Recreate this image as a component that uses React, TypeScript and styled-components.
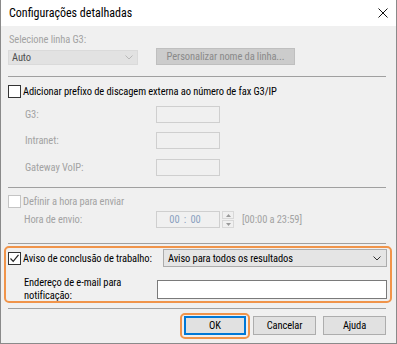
import React from "react";
import styled, { createGlobalStyle } from "styled-components";

const Global = createGlobalStyle`
  html, body { margin: 0; padding: 0; background: #ffffff; }
  * { box-sizing: border-box; }
`;

const Window = styled.div`
  width: 397px;
  height: 344px;
  border: 1px solid #8a8a8a;
  border-top: none;
  background: #f0f0f0;
  font-family: "Roboto Condensed", "Liberation Sans", Arial, sans-serif;
  font-size: 10.5px;
  letter-spacing: -0.1px;
  color: #000;
  display: flex;
  flex-direction: column;
  overflow: hidden;
`;

const TitleBar = styled.div`
  height: 26px;
  background: #ffffff;
  display: flex;
  align-items: center;
  justify-content: space-between;
  padding: 0 8px 0 8px;
`;

const Title = styled.span`
  font-size: 12px;
  letter-spacing: 0;
  color: #000;
`;

const Body = styled.div`
  flex: 1;
  display: flex;
  flex-direction: column;
  padding: 7px 10px 0 7px;
`;

const Label = styled.div<{ $disabled?: boolean; $indent?: number }>`
  height: 14px;
  line-height: 14px;
  white-space: nowrap;
  color: ${(p) => (p.$disabled ? "#a3a3a3" : "#000")};
  padding-left: ${(p) => p.$indent ?? 0}px;
`;

const Row = styled.div<{ $mt: number; $h: number }>`
  margin-top: ${(p) => p.$mt}px;
  height: ${(p) => p.$h}px;
  display: flex;
  align-items: center;
`;

const FieldRow = styled.div<{ $mt: number; $h: number }>`
  margin-top: ${(p) => p.$mt}px;
  height: ${(p) => p.$h}px;
  display: grid;
  grid-template-columns: 148px auto auto auto;
  justify-content: start;
  align-items: center;
`;

const Separator = styled.div<{ $mt: number }>`
  margin-top: ${(p) => p.$mt}px;
  height: 1px;
  background: #a0a0a0;
`;

const DisabledSelect = styled.div`
  width: 130px;
  height: 15px;
  margin-top: 2px;
  background: #e2e2e2;
  border: 1px solid #dadada;
  display: flex;
  align-items: center;
  justify-content: space-between;
  padding: 0 4px 0 3px;
  color: #4f4f4f;
`;

const DisabledButton = styled.div`
  margin-left: 18px;
  width: 139px;
  height: 17px;
  background: #cccccc;
  border: 1px solid #bfbfbf;
  color: #8a8a8a;
  white-space: nowrap;
  display: flex;
  align-items: center;
  justify-content: center;
`;

const Check = styled.span<{ $disabled?: boolean }>`
  width: 13px;
  height: 13px;
  flex: none;
  border: 1px solid ${(p) => (p.$disabled ? "#c4c4c4" : "#333")};
  background: #fff;
  display: inline-flex;
  align-items: center;
  justify-content: center;
  margin-right: 2px;
`;

const CheckText = styled.span<{ $disabled?: boolean }>`
  color: ${(p) => (p.$disabled ? "#a3a3a3" : "#000")};
  white-space: nowrap;
`;

const EmptyBox = styled.div`
  width: 64px;
  height: 17px;
  border: 1px solid #cfcfcf;
  background: #f0f0f0;
`;

const TimeBox = styled.div`
  width: 64px;
  height: 17px;
  border: 1px solid #cfcfcf;
  background: #f0f0f0;
  color: #8aa0c0;
  display: flex;
  align-items: center;
  justify-content: center;
  padding-right: 6px;
  word-spacing: 2px;
`;

const Spinner = styled.div`
  margin-left: 2px;
  width: 12px;
  height: 17px;
  display: flex;
  flex-direction: column;
  gap: 1px;
`;

const SpinBtn = styled.div`
  flex: 1;
  border: 1px solid #d8d8d8;
  background: #f0f0f0;
  display: flex;
  align-items: center;
  justify-content: center;
`;

const RangeText = styled.span`
  margin-left: 8px;
  color: #a3a3a3;
  white-space: nowrap;
`;

const Highlight = styled.div`
  margin: 2px -6px 0 -4px;
  height: 57px;
  border: 2px solid #f0944a;
  border-radius: 5px;
  padding: 1px 3px 0 2px;
  display: flex;
  flex-direction: column;
`;

const HRow = styled.div<{ $mt: number; $h: number; $col: number }>`
  margin-top: ${(p) => p.$mt}px;
  height: ${(p) => p.$h}px;
  display: grid;
  grid-template-columns: ${(p) => p.$col}px 1fr;
  align-items: center;
`;

const CheckWrap = styled.div`
  display: flex;
  align-items: center;
`;

const Combo = styled.div`
  height: 18px;
  background: #e5e5e5;
  border: 1px solid #acacac;
  display: flex;
  align-items: center;
  justify-content: space-between;
  padding: 0 5px 0 4px;
`;

const TwoLine = styled.div`
  padding-left: 16px;
  line-height: 13px;
`;

const TextInput = styled.div`
  height: 19px;
  background: #fff;
  border: 1px solid #7a7a7a;
`;

const ButtonRow = styled.div`
  margin-top: 7px;
  height: 19px;
  display: flex;
  justify-content: flex-end;
  gap: 7px;
`;

const Focus = styled.div`
  position: relative;
  display: flex;
  &::before {
    content: "";
    position: absolute;
    left: -4px;
    right: -4px;
    top: -3px;
    bottom: -4px;
    border: 2px solid #f0944a;
    border-radius: 5px;
  }
`;

const Button = styled.div<{ $primary?: boolean }>`
  width: ${(p) => (p.$primary ? 62 : 63)}px;
  height: 19px;
  background: #e1e1e1;
  border: ${(p) => (p.$primary ? "2px solid #0078d7" : "1px solid #adadad")};
  display: flex;
  align-items: center;
  justify-content: center;
`;

const Chevron = ({ color }: { color: string }) => (
  <svg width="8" height="5" viewBox="0 0 8 5">
    <path d="M0.5 0.5 L4 4 L7.5 0.5" fill="none" stroke={color} strokeWidth="1" />
  </svg>
);

const Tick = () => (
  <svg width="11" height="11" viewBox="0 0 11 11">
    <path d="M1.5 5.5 L4.2 8.3 L9.5 1.8" fill="none" stroke="#222" strokeWidth="1.2" />
  </svg>
);

const Arrow = ({ up }: { up?: boolean }) => (
  <svg width="5" height="3" viewBox="0 0 5 3">
    <path d={up ? "M0 3 L2.5 0 L5 3 Z" : "M0 0 L2.5 3 L5 0 Z"} fill="#9a9a9a" />
  </svg>
);

export default function App() {
  return (
    <>
      <Global />
      <Window>
        <TitleBar>
          <Title>Configurações detalhadas</Title>
          <svg width="10" height="10" viewBox="0 0 10 10">
            <path d="M0.5 0.5 L9.5 9.5 M9.5 0.5 L0.5 9.5" stroke="#111" strokeWidth="1" />
          </svg>
        </TitleBar>
        <Body>
          <Label $disabled $indent={1}>Selecione linha G3:</Label>
          <Row $mt={1} $h={17}>
            <DisabledSelect>
              <span>Auto</span>
              <Chevron color="#b8b8b8" />
            </DisabledSelect>
            <DisabledButton>Personalizar nome da linha...</DisabledButton>
          </Row>
          <Separator $mt={11} />
          <Row $mt={7} $h={14}>
            <Check />
            <CheckText>Adicionar prefixo de discagem externa ao número de fax G3/IP</CheckText>
          </Row>
          <FieldRow $mt={8} $h={17}>
            <Label $disabled $indent={17}>G3:</Label>
            <EmptyBox />
          </FieldRow>
          <FieldRow $mt={9} $h={17}>
            <Label $disabled $indent={17}>Intranet:</Label>
            <EmptyBox />
          </FieldRow>
          <FieldRow $mt={10} $h={17}>
            <Label $disabled $indent={17}>Gateway VoIP:</Label>
            <EmptyBox />
          </FieldRow>
          <Separator $mt={11} />
          <Row $mt={6} $h={14}>
            <Check $disabled />
            <CheckText $disabled>Definir a hora para enviar</CheckText>
          </Row>
          <FieldRow $mt={3} $h={17}>
            <Label $disabled $indent={16}>Hora de envio:</Label>
            <TimeBox>00 : 00</TimeBox>
            <Spinner>
              <SpinBtn><Arrow up /></SpinBtn>
              <SpinBtn><Arrow /></SpinBtn>
            </Spinner>
            <RangeText>[00:00 a 23:59]</RangeText>
          </FieldRow>
          <Separator $mt={15} />
          <Highlight>
            <HRow $mt={0} $h={18} $col={155}>
              <CheckWrap>
                <Check><Tick /></Check>
                <CheckText>Aviso de conclusão de trabalho:</CheckText>
              </CheckWrap>
              <Combo>
                <span>Aviso para todos os resultados</span>
                <Chevron color="#333" />
              </Combo>
            </HRow>
            <HRow $mt={9} $h={25} $col={149}>
              <TwoLine>Endereço de e-mail para<br />notificação:</TwoLine>
              <TextInput />
            </HRow>
          </Highlight>
          <Separator $mt={5} />
          <ButtonRow>
            <Focus>
              <Button $primary>OK</Button>
            </Focus>
            <Button>Cancelar</Button>
            <Button>Ajuda</Button>
          </ButtonRow>
        </Body>
      </Window>
    </>
  );
}
